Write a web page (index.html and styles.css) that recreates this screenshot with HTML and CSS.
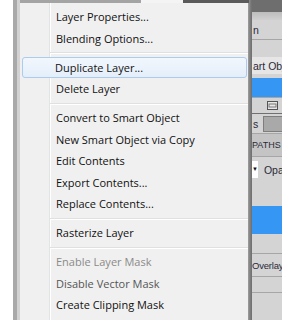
FILE: index.html
```html
<!DOCTYPE html>
<html lang="en">
<head>
  <meta charset="UTF-8">
  <title>Layer Context Menu</title>
  <link rel="stylesheet" href="styles.css">
</head>
<body>
  <div class="screen">
    <!-- window edge behind the menu -->
    <div class="frame-edge"></div>

    <!-- Context Menu -->
    <div class="menu-col">
      <div class="frame-top">
        <span class="frame-gray"></span>
        <span class="frame-light"></span>
        <span class="frame-dark"></span>
      </div>
      <ul class="menu">
        <li class="item">Layer Properties...</li>
        <li class="item">Blending Options...</li>
        <li class="sep"></li>
        <li class="item hover">Duplicate Layer...</li>
        <li class="item">Delete Layer</li>
        <li class="sep"></li>
        <li class="item">Convert to Smart Object</li>
        <li class="item">New Smart Object via Copy</li>
        <li class="item">Edit Contents</li>
        <li class="item">Export Contents...</li>
        <li class="item">Replace Contents...</li>
        <li class="sep"></li>
        <li class="item">Rasterize Layer</li>
        <li class="sep"></li>
        <li class="item disabled">Enable Layer Mask</li>
        <li class="item half">Disable Vector Mask</li>
        <li class="item">Create Clipping Mask</li>
      </ul>
    </div>
    <div class="menu-shadow"></div>

    <!-- Layers panel peeking out on the right -->
    <div class="panel">
      <div class="p-title"></div>
      <div class="p-strip"></div>
      <div class="p-row h19">n</div>
      <div class="p-line"></div>
      <div class="p-row h17"></div>
      <div class="p-row h17 light">art Obj</div>
      <div class="p-row h4"></div>
      <div class="p-blue h19"></div>
      <div class="p-line"></div>
      <div class="p-row h15 icon-row">
        <svg width="11" height="9" viewBox="0 0 11 9">
          <rect x="0.5" y="0.5" width="10" height="8" fill="#e8e8e8" stroke="#555"/>
          <rect x="2" y="3" width="7" height="3" fill="none" stroke="#777"/>
        </svg>
      </div>
      <div class="p-line dark"></div>
      <div class="p-row h19 tab-row">
        <span>s</span>
        <span class="p-box"></span>
      </div>
      <div class="p-line"></div>
      <div class="p-row h22 paths">PATHS</div>
      <div class="p-line"></div>
      <div class="p-row h25 blend-row">
        <span class="p-select">&#9660;</span>
        <span>Opa</span>
      </div>
      <div class="p-row h24"></div>
      <div class="p-blue h28"></div>
      <div class="p-row h19"></div>
      <div class="p-line"></div>
      <div class="p-row h22 flush">Overlay</div>
      <div class="p-line"></div>
      <div class="p-row h15"></div>
      <div class="p-line"></div>
      <div class="p-row rest"></div>
    </div>
  </div>
</body>
</html>
```

FILE: styles.css
```css
/* General Styles */
body {
  margin: 0;
  background: #fff;
  font-family: "Open Sans", "Noto Sans", sans-serif;
}

.screen {
  display: flex;
  height: 320px;
  padding-left: 13px;
  overflow: hidden;
}

.frame-edge {
  width: 7px;
  background: linear-gradient(to right, #a9a9a9 0, #a9a9a9 4px, #d2d2d2 4px);
}

.menu-col {
  width: 229px;
  display: flex;
  flex-direction: column;
}

.frame-top {
  height: 3px;
  display: flex;
}

.frame-gray {
  width: 121px;
  background: #a4a4a4;
}

.frame-light {
  width: 42px;
  background: #f4f4f4;
}

.frame-dark {
  flex: 1;
  background: #5a5a5a;
}

/* Menu */
.menu {
  flex: 1;
  list-style: none;
  margin: 0;
  padding: 3px 0 0;
  background-color: #f0f0f0;
  background-image: linear-gradient(to right,
    transparent 29px, #e2e3e3 29px, #e2e3e3 30px,
    #fff 30px, #fff 31px, transparent 31px);
  border-right: 1px solid #979797;
  font-size: 11px;
  color: #111;
}

.item {
  height: 21.5px;
  line-height: 21.5px;
  padding-left: 34px;
  margin: 0 1px 0 2px;
  white-space: nowrap;
  box-sizing: border-box;
}

.item.hover {
  border: 1px solid #abcbef;
  border-radius: 3px;
  padding-left: 32px;
  line-height: 19.5px;
  background: linear-gradient(#f2f7fd, #e4eefa);
}

.item.disabled {
  color: #8a8a8a;
}

.item.half {
  color: #555;
}

.sep {
  height: 7.5px;
  margin-left: 30px;
  background: linear-gradient(transparent 3px, #e0e0e0 3px, #e0e0e0 4px, #fff 4px, #fff 5px, transparent 5px);
}

.menu-shadow {
  width: 3px;
  background: linear-gradient(to right, #8c8c8c, #6d6d6d);
}

/* Layers panel */
.panel {
  flex: 1;
  display: flex;
  flex-direction: column;
  background: #d4d4d4;
  font-family: "Liberation Sans", sans-serif;
  font-size: 10.5px;
  color: #2a2a3a;
  white-space: nowrap;
  overflow: hidden;
}

.p-title {
  height: 12px;
  background: #6e6e6e;
}

.p-strip {
  height: 8px;
  background: linear-gradient(#bdbdbd, #d0d0d0);
}

.p-row {
  display: flex;
  align-items: center;
  padding-left: 1px;
}

.p-row.light {
  background: #e6e6e6;
}

.p-row.flush {
  padding-left: 0;
  font-size: 9.5px;
  letter-spacing: -0.2px;
}

.p-line {
  height: 1px;
  background: #a6a6a6;
}

.p-line.dark {
  background: #707070;
}

.p-blue {
  background: #3596f4;
}

.h4 { height: 4px; }
.h15 { height: 15px; }
.h17 { height: 17px; }
.h19 { height: 19px; }
.h22 { height: 22px; }
.h24 { height: 24px; }
.h25 { height: 25px; }
.h28 { height: 28px; }
.rest { flex: 1; }

.icon-row {
  padding-left: 15px;
}

.tab-row {
  gap: 5px;
}

.p-box {
  flex: 1;
  height: 14px;
  background: #a9a9a9;
  border: 1px solid #7e7e7e;
  border-right: none;
}

.paths {
  background: #c4c4c4;
  font-size: 9px;
  padding-left: 0;
}

.blend-row {
  gap: 6px;
  padding-left: 0;
}

.p-select {
  width: 9px;
  height: 17px;
  background: #fff;
  font-size: 6px;
  line-height: 17px;
  text-align: right;
  color: #111;
}
```
